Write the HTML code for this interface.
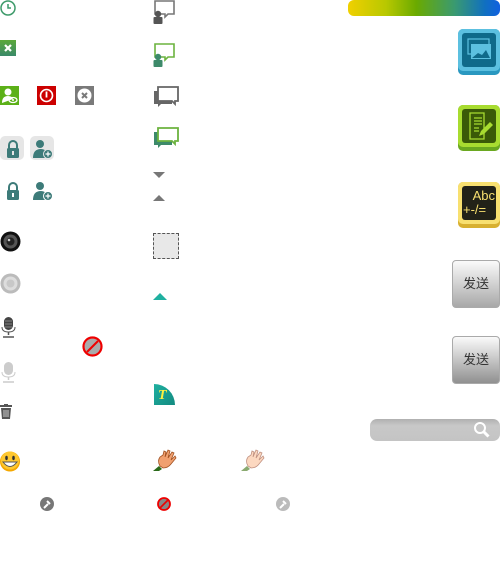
<!DOCTYPE html>
<html><head><meta charset="utf-8"><style>
html,body{margin:0;padding:0;background:#fff;width:500px;height:561px;overflow:hidden;position:relative;font-family:"Liberation Sans",sans-serif}
.a{position:absolute}
</style></head><body>
<!-- col1 -->
<svg class="a" style="left:0;top:0" width="16" height="16"><circle cx="8" cy="8" r="7" fill="none" stroke="#3d9a6a" stroke-width="1.5"/><path d="M8 4v4h3" stroke="#3d9a6a" stroke-width="1.5" fill="none"/></svg>
<div class="a" style="left:0;top:40px;width:16px;height:16px;background:linear-gradient(#5aa83a,#3a8a6a)"></div>
<svg class="a" style="left:0;top:40px" width="16" height="16"><path d="M5 5l6 6M11 5l-6 6" stroke="#fff" stroke-width="2.2"/></svg>
<div class="a" style="left:0;top:86px;width:19px;height:19px;background:#5cb018"></div>
<svg class="a" style="left:0;top:86px" width="19" height="19"><circle cx="8" cy="6" r="3.5" fill="#fff"/><path d="M2 17q0-7 6-7 4 0 5 3" fill="#fff"/><ellipse cx="13" cy="14" rx="4" ry="2.5" fill="none" stroke="#fff" stroke-width="1.3"/><circle cx="13" cy="14" r="1" fill="#fff"/></svg>
<div class="a" style="left:37px;top:86px;width:19px;height:19px;background:#cc0000"></div>
<svg class="a" style="left:37px;top:86px" width="19" height="19"><circle cx="9.5" cy="9.5" r="6" fill="none" stroke="#fff" stroke-width="1.6"/><path d="M9.5 5.5v6" stroke="#fff" stroke-width="1.8"/></svg>
<div class="a" style="left:75px;top:86px;width:19px;height:19px;background:#7a7a7a"></div>
<svg class="a" style="left:75px;top:86px" width="19" height="19"><circle cx="9.5" cy="9.5" r="7" fill="#fff"/><path d="M7 7l5 5M12 7l-5 5" stroke="#7a7a7a" stroke-width="2"/></svg>
<div class="a" style="left:0;top:136px;width:24px;height:24px;background:#e6e6e6;border-radius:5px"></div>
<div class="a" style="left:30px;top:136px;width:24px;height:24px;background:#e6e6e6;border-radius:5px"></div>
<svg class="a" style="left:5px;top:139px" width="16" height="20"><path d="M4 9V6a4 4 0 0 1 8 0v3" fill="none" stroke="#3d7b79" stroke-width="2"/><rect x="2" y="9" width="12" height="10" rx="1.5" fill="#3d7b79"/><rect x="7" y="12" width="2" height="4" fill="#e6e6e6"/></svg>
<svg class="a" style="left:32px;top:139px" width="22" height="20"><circle cx="8" cy="5" r="4" fill="#3d7b79"/><path d="M1 19q0-9 8-9 4 0 5 3v6z" fill="#3d7b79"/><circle cx="16" cy="15" r="4.5" fill="#3d7b79" stroke="#e6e6e6"/><path d="M16 12.5v5M13.5 15h5" stroke="#fff" stroke-width="1.2"/></svg>
<svg class="a" style="left:5px;top:181px" width="16" height="20"><path d="M4 9V6a4 4 0 0 1 8 0v3" fill="none" stroke="#3d7b79" stroke-width="2"/><rect x="2" y="9" width="12" height="10" rx="1.5" fill="#3d7b79"/><rect x="7" y="12" width="2" height="4" fill="#fff"/></svg>
<svg class="a" style="left:32px;top:181px" width="22" height="20"><circle cx="8" cy="5" r="4" fill="#3d7b79"/><path d="M1 19q0-9 8-9 4 0 5 3v6z" fill="#3d7b79"/><circle cx="16" cy="15" r="4.5" fill="#3d7b79" stroke="#fff"/><path d="M16 12.5v5M13.5 15h5" stroke="#fff" stroke-width="1.2"/></svg>
<svg class="a" style="left:0;top:231px" width="21" height="21"><circle cx="10.5" cy="10.5" r="10" fill="#111"/><circle cx="10.5" cy="10.5" r="7" fill="#555"/><circle cx="10.5" cy="10.5" r="4" fill="#222"/><circle cx="9" cy="9" r="1.3" fill="#ccc"/></svg>
<svg class="a" style="left:0;top:273px" width="21" height="21"><circle cx="10.5" cy="10.5" r="10" fill="#bbb"/><circle cx="10.5" cy="10.5" r="7" fill="#ddd"/><circle cx="10.5" cy="10.5" r="4" fill="#c8c8c8"/></svg>
<svg class="a" style="left:1px;top:317px" width="15" height="21"><rect x="3" y="0" width="9" height="13" rx="4.5" fill="#444"/><path d="M4 4h7M4 7h7M4 10h7" stroke="#999" stroke-width=".8"/><path d="M1 10q0 5 6.5 5t6.5-5" fill="none" stroke="#555"/><path d="M7.5 15v3M2 20h11" stroke="#555" stroke-width="1.5"/></svg>
<svg class="a" style="left:82px;top:336px" width="21" height="21"><circle cx="10.5" cy="10.5" r="8" fill="#aaa"/><circle cx="10.5" cy="10.5" r="9" fill="none" stroke="#e00" stroke-width="2.2"/><path d="M5 16L16 5" stroke="#e00" stroke-width="2"/></svg>
<svg class="a" style="left:1px;top:362px" width="15" height="21"><rect x="3" y="0" width="9" height="13" rx="4.5" fill="#ccc"/><path d="M1 10q0 5 6.5 5t6.5-5" fill="none" stroke="#ccc"/><path d="M7.5 15v3M2 20h11" stroke="#ccc" stroke-width="1.5"/></svg>
<svg class="a" style="left:0;top:404px" width="12" height="16"><rect x="0" y="1" width="12" height="2" fill="#555"/><rect x="4" y="0" width="4" height="2" fill="#555"/><path d="M1 4h10l-1 11H2z" fill="#555"/><path d="M4 6v7M6 6v7M8 6v7" stroke="#ccc"/></svg>
<svg class="a" style="left:0;top:451px" width="21" height="21"><circle cx="10" cy="10.5" r="10" fill="#f5a800"/><circle cx="10" cy="9.5" r="9" fill="#ffc830"/><ellipse cx="6.5" cy="7" rx="1.3" ry="2.2" fill="#333"/><ellipse cx="13.5" cy="7" rx="1.3" ry="2.2" fill="#333"/><path d="M3 11q7 9 14 0z" fill="#fff" stroke="#555"/></svg>
<svg class="a" style="left:40px;top:497px" width="14" height="14"><circle cx="7" cy="7" r="7" fill="#777"/><path d="M4 11l4-4M7 4l3 3" stroke="#fff" stroke-width="2"/></svg>
<!-- col2 -->
<svg class="a" style="left:153px;top:0" width="22" height="24"><path d="M2 1h19v13h-6l-3 3v-3H2z" fill="#fff" stroke="#777" stroke-width="1.6"/><circle cx="5" cy="14" r="3.2" fill="#555"/><rect x="0.5" y="17" width="9" height="7" rx="1" fill="#555"/></svg>
<svg class="a" style="left:153px;top:43px" width="22" height="24"><path d="M2 1h19v13h-6l-3 3v-3H2z" fill="#fff" stroke="#6cb33f" stroke-width="1.6"/><circle cx="5" cy="14" r="3.2" fill="#3d8a6a"/><rect x="0.5" y="17" width="9" height="7" rx="1" fill="#3d8a6a"/></svg>
<svg class="a" style="left:153px;top:86px" width="26" height="24"><path d="M1 5h18v13H8l-3 3v-3H1z" fill="#666"/><path d="M5 1h20v14h-3v3l-3-3H5z" fill="#fff" stroke="#666" stroke-width="1.8"/></svg>
<svg class="a" style="left:153px;top:127px" width="26" height="23"><path d="M1 5h18v13H8l-3 3v-3H1z" fill="#3d8a6a"/><path d="M5 1h20v13h-3v3l-3-3H5z" fill="#fff" stroke="#6cb33f" stroke-width="1.8"/></svg>
<div class="a" style="left:153px;top:172px;width:0;height:0;border-left:6.5px solid transparent;border-right:6.5px solid transparent;border-top:6px solid #777"></div>
<div class="a" style="left:153px;top:195px;width:0;height:0;border-left:6.5px solid transparent;border-right:6.5px solid transparent;border-bottom:6px solid #777"></div>
<div class="a" style="left:153px;top:233px;width:24px;height:24px;background:#e8e8e8;border:1px dashed #555"></div>
<div class="a" style="left:153px;top:293px;width:0;height:0;border-left:7px solid transparent;border-right:7px solid transparent;border-bottom:7px solid #1fb0a0"></div>
<div class="a" style="left:154px;top:384px;width:21px;height:21px;background:linear-gradient(135deg,#1fb0a0,#138a80);border-top-right-radius:21px;color:#ffef40;font:italic bold 14px 'Liberation Serif',serif;line-height:24px;padding-left:4px;box-sizing:border-box">T</div>
<svg class="a" style="left:153px;top:449px" width="25" height="22"><path d="M0 22l6-5 3 3-3 2z" fill="#2a6a1a"/><path d="M7 17q-3-5 0-9l3-2 1-4 2 1-1 5 3-7 2 1-2 7 4-6 2 1-3 7 4-4 1 2-5 6q-3 4-8 4z" fill="#f0a070" stroke="#a05020" stroke-width=".8"/></svg>
<svg class="a" style="left:241px;top:449px" width="25" height="22"><path d="M0 22l6-5 3 3-3 2z" fill="#8aaa70"/><path d="M7 17q-3-5 0-9l3-2 1-4 2 1-1 5 3-7 2 1-2 7 4-6 2 1-3 7 4-4 1 2-5 6q-3 4-8 4z" fill="#fcd8c0" stroke="#c09080" stroke-width=".8"/></svg>
<svg class="a" style="left:157px;top:497px" width="14" height="14"><circle cx="7" cy="7" r="6" fill="#888"/><circle cx="7" cy="7" r="6" fill="none" stroke="#e00" stroke-width="1.8"/><path d="M3 11l8-8" stroke="#e00" stroke-width="1.6"/></svg>
<svg class="a" style="left:276px;top:497px" width="14" height="14"><circle cx="7" cy="7" r="7" fill="#bbb"/><path d="M4 11l4-4M7 4l3 3" stroke="#fff" stroke-width="2"/></svg>
<!-- col3 -->
<div class="a" style="left:348px;top:0;width:152px;height:16px;border-radius:6px;background:linear-gradient(90deg,#f0d000,#b8c800 25%,#6aaa00 45%,#3a9a70 70%,#1070c0 90%,#1060e0)"></div>
<div class="a" style="left:458px;top:29px;width:42px;height:46px;border-radius:5px;background:#2a98c0"></div>
<div class="a" style="left:458px;top:29px;width:42px;height:42px;border-radius:5px;background:#5cc0e0"></div>
<div class="a" style="left:462px;top:33px;width:34px;height:34px;border-radius:3px;background:#0f6a8a"></div>
<svg class="a" style="left:464px;top:35px" width="30" height="30"><rect x="4" y="4" width="21" height="15" fill="none" stroke="#5cc0e0" stroke-width="1.2"/><rect x="7" y="9" width="20" height="15" fill="#5cc0e0"/><path d="M8 23l6-5 4 2 4-5 4 8z" fill="#0f6a8a"/></svg>
<div class="a" style="left:458px;top:105px;width:42px;height:46px;border-radius:5px;background:#6aa820"></div>
<div class="a" style="left:458px;top:105px;width:42px;height:42px;border-radius:5px;background:#a8dc30"></div>
<div class="a" style="left:462px;top:109px;width:34px;height:34px;border-radius:3px;background:#3a5a08"></div>
<svg class="a" style="left:464px;top:111px" width="30" height="30"><path d="M6 2h14v26H6z" fill="none" stroke="#a8dc30" stroke-width="1.3"/><path d="M10 7h8M10 10h8M10 13h8M10 17h5M10 20h5" stroke="#a8dc30" stroke-width="1.3"/><path d="M15 25l2-5 9-9 3 3-9 9z" fill="#a8dc30"/></svg>
<div class="a" style="left:458px;top:182px;width:42px;height:46px;border-radius:5px;background:#d8b030"></div>
<div class="a" style="left:458px;top:182px;width:42px;height:42px;border-radius:5px;background:#f8e070"></div>
<div class="a" style="left:462px;top:186px;width:34px;height:34px;border-radius:3px;background:#222218;color:#f8e070;font-size:13px;line-height:14px;box-sizing:border-box;padding:3px 0 0 1px"><div style="text-align:right;padding-right:1px">Abc</div><div>+-/=</div></div>
<div class="a" style="left:452px;top:260px;width:46px;height:46px;border:1px solid #aaa;border-radius:4px;background:linear-gradient(#fafafa,#a8a8a8);font:13px 'Liberation Sans','Noto Sans CJK SC',sans-serif;color:#333;text-align:center;line-height:46px">发送</div>
<div class="a" style="left:452px;top:336px;width:46px;height:46px;border:1px solid #aaa;border-radius:4px;background:linear-gradient(#fafafa,#909090);font:13px 'Liberation Sans','Noto Sans CJK SC',sans-serif;color:#333;text-align:center;line-height:46px">发送</div>
<div class="a" style="left:370px;top:419px;width:130px;height:22px;border-radius:7px;background:linear-gradient(#b0b0b0,#c8c8c8 30%,#c4c4c4)"></div>
<svg class="a" style="left:472px;top:421px" width="20" height="19"><circle cx="8" cy="7" r="5" fill="none" stroke="#fff" stroke-width="2"/><path d="M11.5 10.5l5 5" stroke="#fff" stroke-width="3"/></svg>
</body></html>
